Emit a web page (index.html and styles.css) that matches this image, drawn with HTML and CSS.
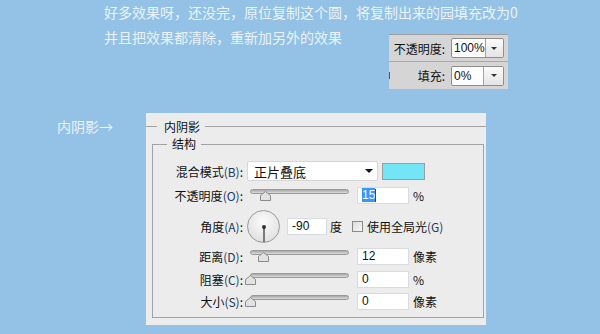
FILE: index.html
```html
<!DOCTYPE html>
<html lang="zh-CN">
<head>
    <meta charset="UTF-8">
    <meta name="viewport" content="width=device-width, initial-scale=1.0">
    <title>内阴影</title>
    <link rel="stylesheet" href="styles.css">
</head>
<body>
<div class="page">

    <!-- Notes on top -->
    <p class="note">好多效果呀，还没完，原位复制这个圆，将复制出来的园填充改为0</p>
    <div class="note-row">
        <p class="note note-short">并且把效果都清除，重新加另外的效果</p>

        <!-- Layers palette crop -->
        <div class="layer-box">
            <div class="layer-row">
                <span class="layer-label">不透明度:</span>
                <span class="combo"><span class="combo-value">100%</span><span class="combo-btn"></span></span>
            </div>
            <div class="layer-row layer-row-fill">
                <span class="layer-mark"></span>
                <span class="layer-label">填充:</span>
                <span class="combo"><span class="combo-value">0%</span><span class="combo-btn"></span></span>
            </div>
        </div>
    </div>

    <!-- Inner shadow dialog -->
    <div class="effect-row">
        <div class="effect-tag">内阴影→</div>
        <div class="panel">
            <div class="panel-title">内阴影</div>
            <fieldset class="group">
                <legend>结构</legend>
                <div class="fields">
                    <div class="field">
                        <span class="field-label">混合模式<span class="key">(B)</span>:</span>
                        <span class="select">正片叠底</span>
                        <span class="swatch"></span>
                    </div>
                    <div class="field field-opacity">
                        <span class="field-label">不透明度<span class="key">(O)</span>:</span>
                        <span class="slider">
                            <span class="thumb" style="left: 15%"><svg width="11" height="10" viewBox="0 0 11 10"><path d="M5.5 0.5 L10.5 4.5 L10.5 9.5 L0.5 9.5 L0.5 4.5 Z" fill="#e2e2e2" stroke="#8a8a8a"/></svg></span>
                        </span>
                        <span class="num"><span class="sel">15</span><span class="caret"></span></span>
                        <span class="unit">%</span>
                    </div>
                    <div class="field field-angle">
                        <span class="field-label">角度<span class="key">(A)</span>:</span>
                        <span class="dial"></span>
                        <span class="num num-angle">-90</span>
                        <span class="unit">度</span>
                        <span class="check"></span>
                        <span class="check-label">使用全局光<span class="key">(G)</span></span>
                    </div>
                    <div class="field field-distance">
                        <span class="field-label">距离<span class="key">(D)</span>:</span>
                        <span class="slider">
                            <span class="thumb" style="left: 13%"><svg width="11" height="10" viewBox="0 0 11 10"><path d="M5.5 0.5 L10.5 4.5 L10.5 9.5 L0.5 9.5 L0.5 4.5 Z" fill="#e2e2e2" stroke="#8a8a8a"/></svg></span>
                        </span>
                        <span class="num">12</span>
                        <span class="unit">像素</span>
                    </div>
                    <div class="field">
                        <span class="field-label">阻塞<span class="key">(C)</span>:</span>
                        <span class="slider">
                            <span class="thumb" style="left: 0%"><svg width="11" height="10" viewBox="0 0 11 10"><path d="M5.5 0.5 L10.5 4.5 L10.5 9.5 L0.5 9.5 L0.5 4.5 Z" fill="#e2e2e2" stroke="#8a8a8a"/></svg></span>
                        </span>
                        <span class="num">0</span>
                        <span class="unit">%</span>
                    </div>
                    <div class="field">
                        <span class="field-label">大小<span class="key">(S)</span>:</span>
                        <span class="slider">
                            <span class="thumb" style="left: 0%"><svg width="11" height="10" viewBox="0 0 11 10"><path d="M5.5 0.5 L10.5 4.5 L10.5 9.5 L0.5 9.5 L0.5 4.5 Z" fill="#e2e2e2" stroke="#8a8a8a"/></svg></span>
                        </span>
                        <span class="num">0</span>
                        <span class="unit">像素</span>
                    </div>
                </div>
            </fieldset>
        </div>
    </div>

</div>
</body>
</html>
```

FILE: styles.css
```css
/* Page */
html, body {
    margin: 0;
    padding: 0;
    background-color: #93c2e6;
    font-family: "Noto Sans CJK SC", "Liberation Sans", sans-serif;
}
.page {
    width: 600px;
    height: 334px;
    overflow: hidden;
}

/* Notes */
.note {
    margin: 0 0 0 104px;
    font-size: 14px;
    line-height: 25px;
    color: #eaf3fb;
    white-space: nowrap;
}
.note-row {
    display: flex;
    align-items: flex-start;
}
.note-short {
    width: 285px;
    flex: none;
}

/* Layers palette crop */
.layer-box {
    margin-top: 9px;
    width: 119px;
    background-color: #d5d5d5;
    border-top: 1px solid #9e9e9e;
}
.layer-row {
    display: flex;
    align-items: center;
    justify-content: flex-end;
    height: 26px;
    padding-right: 4px;
    font-size: 12px;
    color: #111;
}
.layer-row-fill {
    height: 27px;
    border-top: 1px solid #a9a9a9;
}
.layer-mark {
    width: 1px;
    height: 7px;
    background-color: #555;
    margin-right: auto;
}
.layer-label {
    margin-right: 6px;
}
.combo {
    display: flex;
    width: 53px;
    height: 20px;
    box-sizing: border-box;
    border: 1px solid #8e8e8e;
    border-radius: 2px;
    background-color: #fff;
}
.combo-value {
    flex: 1;
    padding-left: 2px;
    font-family: "Liberation Sans", sans-serif;
    font-size: 12px;
    line-height: 18px;
}
.combo-btn {
    width: 19px;
    border-left: 1px solid #a5a5a5;
    background: linear-gradient(#fbfbfb, #e4e4e4);
    display: flex;
    align-items: center;
    justify-content: center;
}
.combo-btn::after {
    content: "";
    border-left: 3px solid transparent;
    border-right: 3px solid transparent;
    border-top: 3px solid #333;
}

/* Effect row */
.effect-row {
    display: flex;
    margin-top: 24px;
}
.effect-tag {
    width: 89px;
    padding-left: 57px;
    font-size: 14px;
    line-height: 26px;
    color: #eaf3fb;
}
.panel {
    width: 340px;
    height: 212px;
    box-sizing: border-box;
    padding-top: 5px;
    background-color: #ececec;
    font-size: 12px;
    color: #111;
}
.panel-title {
    display: flex;
    align-items: center;
    height: 16px;
}
.panel-title::before {
    content: "";
    width: 11px;
    border-top: 1px solid #a3a3a3;
    margin-right: 7px;
}
.panel-title::after {
    content: "";
    flex: 1;
    border-top: 1px solid #a3a3a3;
    margin-left: 5px;
}
.group {
    margin: 2px 2px 0 6px;
    padding: 0 0 5px 0;
    border: 1px solid #a3a3a3;
    min-width: 0;
}
.group legend {
    margin-left: 14px;
    padding: 0 5px;
    line-height: 16px;
}
.fields {
    padding-top: 8px;
}

/* Rows */
.field {
    display: flex;
    align-items: center;
    height: 22px;
}
.field-opacity {
    height: 26px;
}
.field-angle {
    height: 36px;
}
.field-distance {
    height: 24px;
}
.field-label {
    width: 90px;
    flex: none;
    text-align: right;
}
.key {
    color: #22385f;
}
.select {
    display: flex;
    align-items: center;
    margin-left: 4px;
    width: 131px;
    height: 20px;
    box-sizing: border-box;
    padding-left: 6px;
    background-color: #fff;
    border: 1px solid #d6d6d6;
    border-radius: 2px;
    font-size: 13px;
}
.select::after {
    content: "";
    margin-left: auto;
    margin-right: 4px;
    border-left: 4px solid transparent;
    border-right: 4px solid transparent;
    border-top: 4px solid #111;
}
.swatch {
    margin-left: 4px;
    width: 43px;
    height: 17px;
    box-sizing: border-box;
    border: 1px solid #9d9d9d;
    background-color: #74e5f7;
}

/* Slider */
.slider {
    position: relative;
    flex: none;
    margin-left: 7px;
    width: 99px;
    height: 12px;
}
.slider::before {
    content: "";
    position: absolute;
    left: 0;
    right: 0;
    top: 0;
    height: 5px;
    box-sizing: border-box;
    border: 1px solid #9a9a9a;
    border-radius: 3px;
    background: linear-gradient(#a8a8a8, #dcdcdc);
}
.thumb {
    position: absolute;
    top: 2px;
    margin-left: -5px;
    width: 11px;
    height: 10px;
    line-height: 0;
}

/* Inputs */
.num {
    display: flex;
    align-items: center;
    flex: none;
    margin-left: 8px;
    width: 52px;
    height: 17px;
    box-sizing: border-box;
    padding-left: 4px;
    border: 1px solid #d8dce1;
    background-color: #fff;
    font-family: "Liberation Sans", sans-serif;
    font-size: 12px;
}
.num-angle {
    margin-left: 7px;
    width: 40px;
}
.sel {
    background-color: #3399ff;
    color: #fff;
    line-height: 14px;
}
.caret {
    width: 1px;
    height: 13px;
    background-color: #6b3a10;
}
.unit {
    margin-left: 4px;
}
.num-angle + .unit {
    margin-left: 3px;
}

/* Angle dial */
.dial {
    position: relative;
    flex: none;
    margin-left: 4px;
    width: 33px;
    height: 33px;
    box-sizing: border-box;
    border: 1px solid #9a9a9a;
    border-radius: 50%;
    background: radial-gradient(circle at 50% 35%, #fbfbfb, #d9d9d9);
}
.dial::before {
    content: "";
    position: absolute;
    left: 15px;
    top: 16px;
    width: 2px;
    height: 15px;
    background-color: #7a7a7a;
}
.dial::after {
    content: "";
    position: absolute;
    left: 14px;
    top: 14px;
    width: 4px;
    height: 4px;
    border-radius: 50%;
    background-color: #333;
}
.check {
    flex: none;
    margin-left: 10px;
    width: 11px;
    height: 11px;
    box-sizing: border-box;
    border: 1px solid #8a8a8a;
    background: linear-gradient(135deg, #dcdcdc, #f8f8f8);
}
.check-label {
    margin-left: 4px;
}
```
